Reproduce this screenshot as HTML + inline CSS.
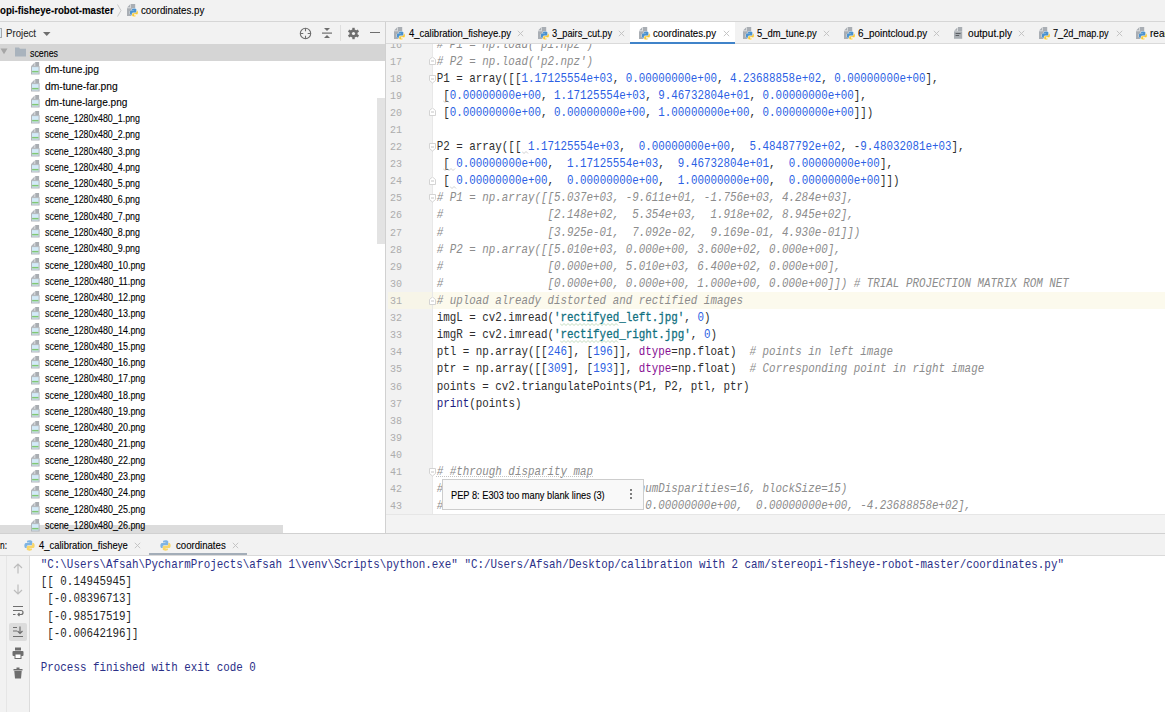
<!DOCTYPE html><html><head><meta charset="utf-8"><style>html,body{margin:0;padding:0}body{width:1165px;height:712px;overflow:hidden;position:relative;background:#fff;font-family:"Liberation Sans",sans-serif}</style></head><body><div style="position:absolute;left:0px;top:0px;width:1165px;height:21px;background:#f2f2f2;"></div>
<div style="position:absolute;left:0px;top:21px;width:1165px;height:1px;background:#d6d6d6;"></div>
<div style="position:absolute;left:0px;top:22px;width:385px;height:22px;background:#f2f2f2;"></div>
<div style="position:absolute;left:0px;top:44px;width:385px;height:490px;background:#ffffff;"></div>
<div style="position:absolute;left:385px;top:22px;width:1px;height:512px;background:#d1d1d1;"></div>
<div style="position:absolute;left:386px;top:22px;width:779px;height:21px;background:#f2f2f2;"></div>
<div style="position:absolute;left:386px;top:43px;width:779px;height:1px;background:#dadada;"></div>
<div style="position:absolute;left:386px;top:44px;width:47px;height:470px;background:#f2f2f2;"></div>
<div style="position:absolute;left:433px;top:44px;width:732px;height:470px;background:#ffffff;"></div>
<div style="position:absolute;left:386px;top:514px;width:779px;height:19px;background:#f3f3f3;"></div>
<div style="position:absolute;left:386px;top:514px;width:779px;height:1px;background:#e6e6e6;"></div>
<div style="position:absolute;left:0px;top:533px;width:1165px;height:1px;background:#d1d1d1;"></div>
<div style="position:absolute;left:0px;top:534px;width:1165px;height:21px;background:#f2f2f2;"></div>
<div style="position:absolute;left:0px;top:555px;width:1165px;height:1px;background:#dadada;"></div>
<div style="position:absolute;left:0px;top:556px;width:30px;height:156px;background:#f2f2f2;"></div>
<div style="position:absolute;left:29px;top:556px;width:1px;height:156px;background:#dcdcdc;"></div>
<div style="position:absolute;left:6px;top:556px;width:1px;height:156px;background:#e6e6e6;"></div>
<div style="position:absolute;left:30px;top:556px;width:1135px;height:156px;background:#ffffff;"></div>
<div style="position:absolute;left:0px;top:1.00px;font:normal bold 10px/20px 'Liberation Sans', sans-serif;color:#000;white-space:pre;-webkit-text-stroke:0.1px #000;transform:scaleX(0.9652);transform-origin:0 0;">opi-fisheye-robot-master</div>
<svg style="position:absolute;left:117px;top:4px" width="5" height="13" viewBox="0 0 5 13"><path d="M0.5 0.5L4 6.5L0.5 12.5" stroke="#c4c4c4" fill="none" stroke-width="0.9"/></svg>
<svg style="position:absolute;left:127px;top:4px" width="12" height="14" viewBox="0 0 12 14"><path d="M3.6 0H8.2V4H3.6Z" fill="#a9aeb4"/><path d="M3 0.5V3.6H0.1Z" fill="#a9aeb4"/><path d="M0 4.2H8.2V12H0Z" fill="#a9aeb4"/><g transform="translate(2.6 4.2) scale(0.56)"><path d="M7.9 0.5C4.2 0.5 4.4 2.1 4.4 2.1V3.8H8V4.3H3C3 4.3 0.5 4 0.5 8S2.7 11.7 2.7 11.7H4V9.9S3.9 7.7 6.2 7.7H9.9S12 7.7 12 5.7V2.4S12.3 0.5 7.9 0.5Z" fill="#4b92cf" stroke="#fff" stroke-width="1.3"/><path d="M8.1 15.5C11.8 15.5 11.6 13.9 11.6 13.9V12.2H8V11.7H13S15.5 12 15.5 8S13.3 4.3 13.3 4.3H12V6.1S12.1 8.3 9.8 8.3H6.1S4 8.3 4 10.3V13.6S3.7 15.5 8.1 15.5Z" fill="#f6c733" stroke="#fff" stroke-width="1.3"/><path d="M7.9 0.5C4.2 0.5 4.4 2.1 4.4 2.1V3.8H8V4.3H3C3 4.3 0.5 4 0.5 8S2.7 11.7 2.7 11.7H4V9.9S3.9 7.7 6.2 7.7H9.9S12 7.7 12 5.7V2.4S12.3 0.5 7.9 0.5Z" fill="#4b92cf"/></g></svg>
<div style="position:absolute;left:140.5px;top:1.00px;font:normal normal 10px/20px 'Liberation Sans', sans-serif;color:#000;white-space:pre;-webkit-text-stroke:0.1px #000;transform:scaleX(0.9732);transform-origin:0 0;">coordinates.py</div>
<div style="position:absolute;left:-6px;top:28px;width:8px;height:10px;background:#dcebf5;box-sizing:border-box;border:1px solid #a5a9ae"></div>
<div style="position:absolute;left:6px;top:24.00px;font:normal normal 10px/20px 'Liberation Sans', sans-serif;color:#2a2a2a;white-space:pre;-webkit-text-stroke:0.1px #2a2a2a;transform:scaleX(0.9639);transform-origin:0 0;">Project</div>
<svg style="position:absolute;left:43px;top:32px" width="8" height="5" viewBox="0 0 8 5"><path d="M0 0H7.5L3.75 4Z" fill="#6e6e6e"/></svg>
<svg style="position:absolute;left:299px;top:27px" width="13" height="13" viewBox="0 0 13 13"><circle cx="6.5" cy="6.5" r="5.2" stroke="#6e6e6e" stroke-width="1.1" fill="none"/><path d="M6.5 1V4.3M6.5 8.7V12M1 6.5H4.3M8.7 6.5H12" stroke="#6e6e6e" stroke-width="1.1"/></svg>
<svg style="position:absolute;left:321px;top:27px" width="12" height="12" viewBox="0 0 12 12"><path d="M3 1H9L6 4Z" fill="#6e6e6e"/><rect x="1" y="5.5" width="10" height="1.2" fill="#6e6e6e"/><path d="M3 11H9L6 8Z" fill="#6e6e6e"/></svg>
<div style="position:absolute;left:340px;top:25px;width:1px;height:16px;background:#dedede;"></div>
<svg style="position:absolute;left:347px;top:27px" width="13" height="13" viewBox="0 0 13 13"><g fill="#6e6e6e"><rect x="5.3" y="0.8" width="2.4" height="3" transform="rotate(0 6.5 6.5)"/><rect x="5.3" y="0.8" width="2.4" height="3" transform="rotate(60 6.5 6.5)"/><rect x="5.3" y="0.8" width="2.4" height="3" transform="rotate(120 6.5 6.5)"/><rect x="5.3" y="0.8" width="2.4" height="3" transform="rotate(180 6.5 6.5)"/><rect x="5.3" y="0.8" width="2.4" height="3" transform="rotate(240 6.5 6.5)"/><rect x="5.3" y="0.8" width="2.4" height="3" transform="rotate(300 6.5 6.5)"/><circle cx="6.5" cy="6.5" r="4"/></g><circle cx="6.5" cy="6.5" r="1.6" fill="#f2f2f2"/></svg>
<div style="position:absolute;left:370px;top:32px;width:10px;height:1.4px;background:#6e6e6e;"></div>
<div style="position:absolute;left:377px;top:98px;width:8px;height:146px;background:#e3e3e3;"></div>
<div style="position:absolute;left:0px;top:525px;width:283px;height:8px;background:#dcdcdc;"></div>
<div style="position:absolute;left:0px;top:44px;width:385px;height:16.5px;background:#d5d5d5;"></div>
<svg style="position:absolute;left:0px;top:48px" width="8" height="7" viewBox="0 0 8 7"><path d="M0.5 0.5H7.5L4 6.2Z" fill="#a6a6a6"/></svg>
<svg style="position:absolute;left:15px;top:47px" width="11" height="10" viewBox="0 0 11 10"><path d="M0 0.5H4L5 1.8H11V9.5H0Z" fill="#a9b3bd"/></svg>
<div style="position:absolute;left:29.5px;top:44.00px;font:normal normal 10px/20px 'Liberation Sans', sans-serif;color:#000;white-space:pre;-webkit-text-stroke:0.1px #000;transform:scaleX(0.8837);transform-origin:0 0;">scenes</div>
<svg style="position:absolute;left:30.6px;top:62.0px" width="9" height="13" viewBox="0 0 9 13"><path d="M0.2 3.9L3.6 0.4V3.9Z" fill="#b3b7bc"/><rect x="4.2" y="0" width="3.9" height="4.1" fill="#a9adb2"/><rect x="0.5" y="4.6" width="7.6" height="7.4" fill="#d3eaf8" stroke="#b1b5ba" stroke-width="1"/><rect x="1.1" y="8.9" width="6.4" height="1.5" fill="#82c674"/></svg>
<div style="position:absolute;left:44.6px;top:60.00px;font:normal normal 10px/20px 'Liberation Sans', sans-serif;color:#000;white-space:pre;-webkit-text-stroke:0.1px #000;transform:scaleX(1.0225);transform-origin:0 0;">dm-tune.jpg</div>
<svg style="position:absolute;left:30.6px;top:79.0px" width="9" height="13" viewBox="0 0 9 13"><path d="M0.2 3.9L3.6 0.4V3.9Z" fill="#b3b7bc"/><rect x="4.2" y="0" width="3.9" height="4.1" fill="#a9adb2"/><rect x="0.5" y="4.6" width="7.6" height="7.4" fill="#d3eaf8" stroke="#b1b5ba" stroke-width="1"/><rect x="1.1" y="8.9" width="6.4" height="1.5" fill="#82c674"/></svg>
<div style="position:absolute;left:44.6px;top:77.00px;font:normal normal 10px/20px 'Liberation Sans', sans-serif;color:#000;white-space:pre;-webkit-text-stroke:0.1px #000;transform:scaleX(1.0312);transform-origin:0 0;">dm-tune-far.png</div>
<svg style="position:absolute;left:30.6px;top:95.0px" width="9" height="13" viewBox="0 0 9 13"><path d="M0.2 3.9L3.6 0.4V3.9Z" fill="#b3b7bc"/><rect x="4.2" y="0" width="3.9" height="4.1" fill="#a9adb2"/><rect x="0.5" y="4.6" width="7.6" height="7.4" fill="#d3eaf8" stroke="#b1b5ba" stroke-width="1"/><rect x="1.1" y="8.9" width="6.4" height="1.5" fill="#82c674"/></svg>
<div style="position:absolute;left:44.6px;top:93.00px;font:normal normal 10px/20px 'Liberation Sans', sans-serif;color:#000;white-space:pre;-webkit-text-stroke:0.1px #000;transform:scaleX(1.0084);transform-origin:0 0;">dm-tune-large.png</div>
<svg style="position:absolute;left:30.6px;top:111.0px" width="9" height="13" viewBox="0 0 9 13"><path d="M0.2 3.9L3.6 0.4V3.9Z" fill="#b3b7bc"/><rect x="4.2" y="0" width="3.9" height="4.1" fill="#a9adb2"/><rect x="0.5" y="4.6" width="7.6" height="7.4" fill="#d3eaf8" stroke="#b1b5ba" stroke-width="1"/><rect x="1.1" y="8.9" width="6.4" height="1.5" fill="#82c674"/></svg>
<div style="position:absolute;left:44.6px;top:109.00px;font:normal normal 10px/20px 'Liberation Sans', sans-serif;color:#000;white-space:pre;-webkit-text-stroke:0.1px #000;transform:scaleX(0.8898);transform-origin:0 0;">scene_1280x480_1.png</div>
<svg style="position:absolute;left:30.6px;top:128.0px" width="9" height="13" viewBox="0 0 9 13"><path d="M0.2 3.9L3.6 0.4V3.9Z" fill="#b3b7bc"/><rect x="4.2" y="0" width="3.9" height="4.1" fill="#a9adb2"/><rect x="0.5" y="4.6" width="7.6" height="7.4" fill="#d3eaf8" stroke="#b1b5ba" stroke-width="1"/><rect x="1.1" y="8.9" width="6.4" height="1.5" fill="#82c674"/></svg>
<div style="position:absolute;left:44.6px;top:125.00px;font:normal normal 10px/20px 'Liberation Sans', sans-serif;color:#000;white-space:pre;-webkit-text-stroke:0.1px #000;transform:scaleX(0.8898);transform-origin:0 0;">scene_1280x480_2.png</div>
<svg style="position:absolute;left:30.6px;top:144.0px" width="9" height="13" viewBox="0 0 9 13"><path d="M0.2 3.9L3.6 0.4V3.9Z" fill="#b3b7bc"/><rect x="4.2" y="0" width="3.9" height="4.1" fill="#a9adb2"/><rect x="0.5" y="4.6" width="7.6" height="7.4" fill="#d3eaf8" stroke="#b1b5ba" stroke-width="1"/><rect x="1.1" y="8.9" width="6.4" height="1.5" fill="#82c674"/></svg>
<div style="position:absolute;left:44.6px;top:142.00px;font:normal normal 10px/20px 'Liberation Sans', sans-serif;color:#000;white-space:pre;-webkit-text-stroke:0.1px #000;transform:scaleX(0.8898);transform-origin:0 0;">scene_1280x480_3.png</div>
<svg style="position:absolute;left:30.6px;top:160.0px" width="9" height="13" viewBox="0 0 9 13"><path d="M0.2 3.9L3.6 0.4V3.9Z" fill="#b3b7bc"/><rect x="4.2" y="0" width="3.9" height="4.1" fill="#a9adb2"/><rect x="0.5" y="4.6" width="7.6" height="7.4" fill="#d3eaf8" stroke="#b1b5ba" stroke-width="1"/><rect x="1.1" y="8.9" width="6.4" height="1.5" fill="#82c674"/></svg>
<div style="position:absolute;left:44.6px;top:158.00px;font:normal normal 10px/20px 'Liberation Sans', sans-serif;color:#000;white-space:pre;-webkit-text-stroke:0.1px #000;transform:scaleX(0.8898);transform-origin:0 0;">scene_1280x480_4.png</div>
<svg style="position:absolute;left:30.6px;top:176.0px" width="9" height="13" viewBox="0 0 9 13"><path d="M0.2 3.9L3.6 0.4V3.9Z" fill="#b3b7bc"/><rect x="4.2" y="0" width="3.9" height="4.1" fill="#a9adb2"/><rect x="0.5" y="4.6" width="7.6" height="7.4" fill="#d3eaf8" stroke="#b1b5ba" stroke-width="1"/><rect x="1.1" y="8.9" width="6.4" height="1.5" fill="#82c674"/></svg>
<div style="position:absolute;left:44.6px;top:174.00px;font:normal normal 10px/20px 'Liberation Sans', sans-serif;color:#000;white-space:pre;-webkit-text-stroke:0.1px #000;transform:scaleX(0.8898);transform-origin:0 0;">scene_1280x480_5.png</div>
<svg style="position:absolute;left:30.6px;top:193.0px" width="9" height="13" viewBox="0 0 9 13"><path d="M0.2 3.9L3.6 0.4V3.9Z" fill="#b3b7bc"/><rect x="4.2" y="0" width="3.9" height="4.1" fill="#a9adb2"/><rect x="0.5" y="4.6" width="7.6" height="7.4" fill="#d3eaf8" stroke="#b1b5ba" stroke-width="1"/><rect x="1.1" y="8.9" width="6.4" height="1.5" fill="#82c674"/></svg>
<div style="position:absolute;left:44.6px;top:190.00px;font:normal normal 10px/20px 'Liberation Sans', sans-serif;color:#000;white-space:pre;-webkit-text-stroke:0.1px #000;transform:scaleX(0.8898);transform-origin:0 0;">scene_1280x480_6.png</div>
<svg style="position:absolute;left:30.6px;top:209.0px" width="9" height="13" viewBox="0 0 9 13"><path d="M0.2 3.9L3.6 0.4V3.9Z" fill="#b3b7bc"/><rect x="4.2" y="0" width="3.9" height="4.1" fill="#a9adb2"/><rect x="0.5" y="4.6" width="7.6" height="7.4" fill="#d3eaf8" stroke="#b1b5ba" stroke-width="1"/><rect x="1.1" y="8.9" width="6.4" height="1.5" fill="#82c674"/></svg>
<div style="position:absolute;left:44.6px;top:207.00px;font:normal normal 10px/20px 'Liberation Sans', sans-serif;color:#000;white-space:pre;-webkit-text-stroke:0.1px #000;transform:scaleX(0.8898);transform-origin:0 0;">scene_1280x480_7.png</div>
<svg style="position:absolute;left:30.6px;top:225.0px" width="9" height="13" viewBox="0 0 9 13"><path d="M0.2 3.9L3.6 0.4V3.9Z" fill="#b3b7bc"/><rect x="4.2" y="0" width="3.9" height="4.1" fill="#a9adb2"/><rect x="0.5" y="4.6" width="7.6" height="7.4" fill="#d3eaf8" stroke="#b1b5ba" stroke-width="1"/><rect x="1.1" y="8.9" width="6.4" height="1.5" fill="#82c674"/></svg>
<div style="position:absolute;left:44.6px;top:223.00px;font:normal normal 10px/20px 'Liberation Sans', sans-serif;color:#000;white-space:pre;-webkit-text-stroke:0.1px #000;transform:scaleX(0.8898);transform-origin:0 0;">scene_1280x480_8.png</div>
<svg style="position:absolute;left:30.6px;top:242.0px" width="9" height="13" viewBox="0 0 9 13"><path d="M0.2 3.9L3.6 0.4V3.9Z" fill="#b3b7bc"/><rect x="4.2" y="0" width="3.9" height="4.1" fill="#a9adb2"/><rect x="0.5" y="4.6" width="7.6" height="7.4" fill="#d3eaf8" stroke="#b1b5ba" stroke-width="1"/><rect x="1.1" y="8.9" width="6.4" height="1.5" fill="#82c674"/></svg>
<div style="position:absolute;left:44.6px;top:239.00px;font:normal normal 10px/20px 'Liberation Sans', sans-serif;color:#000;white-space:pre;-webkit-text-stroke:0.1px #000;transform:scaleX(0.8898);transform-origin:0 0;">scene_1280x480_9.png</div>
<svg style="position:absolute;left:30.6px;top:258.0px" width="9" height="13" viewBox="0 0 9 13"><path d="M0.2 3.9L3.6 0.4V3.9Z" fill="#b3b7bc"/><rect x="4.2" y="0" width="3.9" height="4.1" fill="#a9adb2"/><rect x="0.5" y="4.6" width="7.6" height="7.4" fill="#d3eaf8" stroke="#b1b5ba" stroke-width="1"/><rect x="1.1" y="8.9" width="6.4" height="1.5" fill="#82c674"/></svg>
<div style="position:absolute;left:44.6px;top:256.00px;font:normal normal 10px/20px 'Liberation Sans', sans-serif;color:#000;white-space:pre;-webkit-text-stroke:0.1px #000;transform:scaleX(0.8929);transform-origin:0 0;">scene_1280x480_10.png</div>
<svg style="position:absolute;left:30.6px;top:274.0px" width="9" height="13" viewBox="0 0 9 13"><path d="M0.2 3.9L3.6 0.4V3.9Z" fill="#b3b7bc"/><rect x="4.2" y="0" width="3.9" height="4.1" fill="#a9adb2"/><rect x="0.5" y="4.6" width="7.6" height="7.4" fill="#d3eaf8" stroke="#b1b5ba" stroke-width="1"/><rect x="1.1" y="8.9" width="6.4" height="1.5" fill="#82c674"/></svg>
<div style="position:absolute;left:44.6px;top:272.00px;font:normal normal 10px/20px 'Liberation Sans', sans-serif;color:#000;white-space:pre;-webkit-text-stroke:0.1px #000;transform:scaleX(0.8989);transform-origin:0 0;">scene_1280x480_11.png</div>
<svg style="position:absolute;left:30.6px;top:291.0px" width="9" height="13" viewBox="0 0 9 13"><path d="M0.2 3.9L3.6 0.4V3.9Z" fill="#b3b7bc"/><rect x="4.2" y="0" width="3.9" height="4.1" fill="#a9adb2"/><rect x="0.5" y="4.6" width="7.6" height="7.4" fill="#d3eaf8" stroke="#b1b5ba" stroke-width="1"/><rect x="1.1" y="8.9" width="6.4" height="1.5" fill="#82c674"/></svg>
<div style="position:absolute;left:44.6px;top:288.00px;font:normal normal 10px/20px 'Liberation Sans', sans-serif;color:#000;white-space:pre;-webkit-text-stroke:0.1px #000;transform:scaleX(0.8929);transform-origin:0 0;">scene_1280x480_12.png</div>
<svg style="position:absolute;left:30.6px;top:307.0px" width="9" height="13" viewBox="0 0 9 13"><path d="M0.2 3.9L3.6 0.4V3.9Z" fill="#b3b7bc"/><rect x="4.2" y="0" width="3.9" height="4.1" fill="#a9adb2"/><rect x="0.5" y="4.6" width="7.6" height="7.4" fill="#d3eaf8" stroke="#b1b5ba" stroke-width="1"/><rect x="1.1" y="8.9" width="6.4" height="1.5" fill="#82c674"/></svg>
<div style="position:absolute;left:44.6px;top:304.00px;font:normal normal 10px/20px 'Liberation Sans', sans-serif;color:#000;white-space:pre;-webkit-text-stroke:0.1px #000;transform:scaleX(0.8929);transform-origin:0 0;">scene_1280x480_13.png</div>
<svg style="position:absolute;left:30.6px;top:323.0px" width="9" height="13" viewBox="0 0 9 13"><path d="M0.2 3.9L3.6 0.4V3.9Z" fill="#b3b7bc"/><rect x="4.2" y="0" width="3.9" height="4.1" fill="#a9adb2"/><rect x="0.5" y="4.6" width="7.6" height="7.4" fill="#d3eaf8" stroke="#b1b5ba" stroke-width="1"/><rect x="1.1" y="8.9" width="6.4" height="1.5" fill="#82c674"/></svg>
<div style="position:absolute;left:44.6px;top:321.00px;font:normal normal 10px/20px 'Liberation Sans', sans-serif;color:#000;white-space:pre;-webkit-text-stroke:0.1px #000;transform:scaleX(0.8929);transform-origin:0 0;">scene_1280x480_14.png</div>
<svg style="position:absolute;left:30.6px;top:340.0px" width="9" height="13" viewBox="0 0 9 13"><path d="M0.2 3.9L3.6 0.4V3.9Z" fill="#b3b7bc"/><rect x="4.2" y="0" width="3.9" height="4.1" fill="#a9adb2"/><rect x="0.5" y="4.6" width="7.6" height="7.4" fill="#d3eaf8" stroke="#b1b5ba" stroke-width="1"/><rect x="1.1" y="8.9" width="6.4" height="1.5" fill="#82c674"/></svg>
<div style="position:absolute;left:44.6px;top:337.00px;font:normal normal 10px/20px 'Liberation Sans', sans-serif;color:#000;white-space:pre;-webkit-text-stroke:0.1px #000;transform:scaleX(0.8929);transform-origin:0 0;">scene_1280x480_15.png</div>
<svg style="position:absolute;left:30.6px;top:356.0px" width="9" height="13" viewBox="0 0 9 13"><path d="M0.2 3.9L3.6 0.4V3.9Z" fill="#b3b7bc"/><rect x="4.2" y="0" width="3.9" height="4.1" fill="#a9adb2"/><rect x="0.5" y="4.6" width="7.6" height="7.4" fill="#d3eaf8" stroke="#b1b5ba" stroke-width="1"/><rect x="1.1" y="8.9" width="6.4" height="1.5" fill="#82c674"/></svg>
<div style="position:absolute;left:44.6px;top:353.00px;font:normal normal 10px/20px 'Liberation Sans', sans-serif;color:#000;white-space:pre;-webkit-text-stroke:0.1px #000;transform:scaleX(0.8929);transform-origin:0 0;">scene_1280x480_16.png</div>
<svg style="position:absolute;left:30.6px;top:372.0px" width="9" height="13" viewBox="0 0 9 13"><path d="M0.2 3.9L3.6 0.4V3.9Z" fill="#b3b7bc"/><rect x="4.2" y="0" width="3.9" height="4.1" fill="#a9adb2"/><rect x="0.5" y="4.6" width="7.6" height="7.4" fill="#d3eaf8" stroke="#b1b5ba" stroke-width="1"/><rect x="1.1" y="8.9" width="6.4" height="1.5" fill="#82c674"/></svg>
<div style="position:absolute;left:44.6px;top:369.00px;font:normal normal 10px/20px 'Liberation Sans', sans-serif;color:#000;white-space:pre;-webkit-text-stroke:0.1px #000;transform:scaleX(0.8929);transform-origin:0 0;">scene_1280x480_17.png</div>
<svg style="position:absolute;left:30.6px;top:388.0px" width="9" height="13" viewBox="0 0 9 13"><path d="M0.2 3.9L3.6 0.4V3.9Z" fill="#b3b7bc"/><rect x="4.2" y="0" width="3.9" height="4.1" fill="#a9adb2"/><rect x="0.5" y="4.6" width="7.6" height="7.4" fill="#d3eaf8" stroke="#b1b5ba" stroke-width="1"/><rect x="1.1" y="8.9" width="6.4" height="1.5" fill="#82c674"/></svg>
<div style="position:absolute;left:44.6px;top:386.00px;font:normal normal 10px/20px 'Liberation Sans', sans-serif;color:#000;white-space:pre;-webkit-text-stroke:0.1px #000;transform:scaleX(0.8929);transform-origin:0 0;">scene_1280x480_18.png</div>
<svg style="position:absolute;left:30.6px;top:405.0px" width="9" height="13" viewBox="0 0 9 13"><path d="M0.2 3.9L3.6 0.4V3.9Z" fill="#b3b7bc"/><rect x="4.2" y="0" width="3.9" height="4.1" fill="#a9adb2"/><rect x="0.5" y="4.6" width="7.6" height="7.4" fill="#d3eaf8" stroke="#b1b5ba" stroke-width="1"/><rect x="1.1" y="8.9" width="6.4" height="1.5" fill="#82c674"/></svg>
<div style="position:absolute;left:44.6px;top:402.00px;font:normal normal 10px/20px 'Liberation Sans', sans-serif;color:#000;white-space:pre;-webkit-text-stroke:0.1px #000;transform:scaleX(0.8929);transform-origin:0 0;">scene_1280x480_19.png</div>
<svg style="position:absolute;left:30.6px;top:421.0px" width="9" height="13" viewBox="0 0 9 13"><path d="M0.2 3.9L3.6 0.4V3.9Z" fill="#b3b7bc"/><rect x="4.2" y="0" width="3.9" height="4.1" fill="#a9adb2"/><rect x="0.5" y="4.6" width="7.6" height="7.4" fill="#d3eaf8" stroke="#b1b5ba" stroke-width="1"/><rect x="1.1" y="8.9" width="6.4" height="1.5" fill="#82c674"/></svg>
<div style="position:absolute;left:44.6px;top:418.00px;font:normal normal 10px/20px 'Liberation Sans', sans-serif;color:#000;white-space:pre;-webkit-text-stroke:0.1px #000;transform:scaleX(0.8929);transform-origin:0 0;">scene_1280x480_20.png</div>
<svg style="position:absolute;left:30.6px;top:437.0px" width="9" height="13" viewBox="0 0 9 13"><path d="M0.2 3.9L3.6 0.4V3.9Z" fill="#b3b7bc"/><rect x="4.2" y="0" width="3.9" height="4.1" fill="#a9adb2"/><rect x="0.5" y="4.6" width="7.6" height="7.4" fill="#d3eaf8" stroke="#b1b5ba" stroke-width="1"/><rect x="1.1" y="8.9" width="6.4" height="1.5" fill="#82c674"/></svg>
<div style="position:absolute;left:44.6px;top:434.00px;font:normal normal 10px/20px 'Liberation Sans', sans-serif;color:#000;white-space:pre;-webkit-text-stroke:0.1px #000;transform:scaleX(0.8929);transform-origin:0 0;">scene_1280x480_21.png</div>
<svg style="position:absolute;left:30.6px;top:454.0px" width="9" height="13" viewBox="0 0 9 13"><path d="M0.2 3.9L3.6 0.4V3.9Z" fill="#b3b7bc"/><rect x="4.2" y="0" width="3.9" height="4.1" fill="#a9adb2"/><rect x="0.5" y="4.6" width="7.6" height="7.4" fill="#d3eaf8" stroke="#b1b5ba" stroke-width="1"/><rect x="1.1" y="8.9" width="6.4" height="1.5" fill="#82c674"/></svg>
<div style="position:absolute;left:44.6px;top:451.00px;font:normal normal 10px/20px 'Liberation Sans', sans-serif;color:#000;white-space:pre;-webkit-text-stroke:0.1px #000;transform:scaleX(0.8929);transform-origin:0 0;">scene_1280x480_22.png</div>
<svg style="position:absolute;left:30.6px;top:470.0px" width="9" height="13" viewBox="0 0 9 13"><path d="M0.2 3.9L3.6 0.4V3.9Z" fill="#b3b7bc"/><rect x="4.2" y="0" width="3.9" height="4.1" fill="#a9adb2"/><rect x="0.5" y="4.6" width="7.6" height="7.4" fill="#d3eaf8" stroke="#b1b5ba" stroke-width="1"/><rect x="1.1" y="8.9" width="6.4" height="1.5" fill="#82c674"/></svg>
<div style="position:absolute;left:44.6px;top:467.00px;font:normal normal 10px/20px 'Liberation Sans', sans-serif;color:#000;white-space:pre;-webkit-text-stroke:0.1px #000;transform:scaleX(0.8929);transform-origin:0 0;">scene_1280x480_23.png</div>
<svg style="position:absolute;left:30.6px;top:486.0px" width="9" height="13" viewBox="0 0 9 13"><path d="M0.2 3.9L3.6 0.4V3.9Z" fill="#b3b7bc"/><rect x="4.2" y="0" width="3.9" height="4.1" fill="#a9adb2"/><rect x="0.5" y="4.6" width="7.6" height="7.4" fill="#d3eaf8" stroke="#b1b5ba" stroke-width="1"/><rect x="1.1" y="8.9" width="6.4" height="1.5" fill="#82c674"/></svg>
<div style="position:absolute;left:44.6px;top:483.00px;font:normal normal 10px/20px 'Liberation Sans', sans-serif;color:#000;white-space:pre;-webkit-text-stroke:0.1px #000;transform:scaleX(0.8929);transform-origin:0 0;">scene_1280x480_24.png</div>
<svg style="position:absolute;left:30.6px;top:502.0px" width="9" height="13" viewBox="0 0 9 13"><path d="M0.2 3.9L3.6 0.4V3.9Z" fill="#b3b7bc"/><rect x="4.2" y="0" width="3.9" height="4.1" fill="#a9adb2"/><rect x="0.5" y="4.6" width="7.6" height="7.4" fill="#d3eaf8" stroke="#b1b5ba" stroke-width="1"/><rect x="1.1" y="8.9" width="6.4" height="1.5" fill="#82c674"/></svg>
<div style="position:absolute;left:44.6px;top:500.00px;font:normal normal 10px/20px 'Liberation Sans', sans-serif;color:#000;white-space:pre;-webkit-text-stroke:0.1px #000;transform:scaleX(0.8929);transform-origin:0 0;">scene_1280x480_25.png</div>
<svg style="position:absolute;left:30.6px;top:519.0px" width="9" height="13" viewBox="0 0 9 13"><path d="M0.2 3.9L3.6 0.4V3.9Z" fill="#b3b7bc"/><rect x="4.2" y="0" width="3.9" height="4.1" fill="#a9adb2"/><rect x="0.5" y="4.6" width="7.6" height="7.4" fill="#d3eaf8" stroke="#b1b5ba" stroke-width="1"/><rect x="1.1" y="8.9" width="6.4" height="1.5" fill="#82c674"/></svg>
<div style="position:absolute;left:44.6px;top:516.00px;font:normal normal 10px/20px 'Liberation Sans', sans-serif;color:#000;white-space:pre;-webkit-text-stroke:0.1px #000;transform:scaleX(0.8929);transform-origin:0 0;">scene_1280x480_26.png</div>
<div style="position:absolute;left:630px;top:22px;width:105px;height:21px;background:#ffffff;"></div>
<div style="position:absolute;left:630px;top:42px;width:105px;height:2px;background:#4083c9;"></div>
<svg style="position:absolute;left:394px;top:27px" width="12" height="14" viewBox="0 0 12 14"><path d="M3.6 0H8.2V4H3.6Z" fill="#a9aeb4"/><path d="M3 0.5V3.6H0.1Z" fill="#a9aeb4"/><path d="M0 4.2H8.2V12H0Z" fill="#a9aeb4"/><g transform="translate(2.6 4.2) scale(0.56)"><path d="M7.9 0.5C4.2 0.5 4.4 2.1 4.4 2.1V3.8H8V4.3H3C3 4.3 0.5 4 0.5 8S2.7 11.7 2.7 11.7H4V9.9S3.9 7.7 6.2 7.7H9.9S12 7.7 12 5.7V2.4S12.3 0.5 7.9 0.5Z" fill="#4b92cf" stroke="#fff" stroke-width="1.3"/><path d="M8.1 15.5C11.8 15.5 11.6 13.9 11.6 13.9V12.2H8V11.7H13S15.5 12 15.5 8S13.3 4.3 13.3 4.3H12V6.1S12.1 8.3 9.8 8.3H6.1S4 8.3 4 10.3V13.6S3.7 15.5 8.1 15.5Z" fill="#f6c733" stroke="#fff" stroke-width="1.3"/><path d="M7.9 0.5C4.2 0.5 4.4 2.1 4.4 2.1V3.8H8V4.3H3C3 4.3 0.5 4 0.5 8S2.7 11.7 2.7 11.7H4V9.9S3.9 7.7 6.2 7.7H9.9S12 7.7 12 5.7V2.4S12.3 0.5 7.9 0.5Z" fill="#4b92cf"/></g></svg>
<div style="position:absolute;left:408.7px;top:24.00px;font:normal normal 10px/20px 'Liberation Sans', sans-serif;color:#000;white-space:pre;-webkit-text-stroke:0.1px #000;transform:scaleX(0.9507);transform-origin:0 0;">4_calibration_fisheye.py</div>
<svg style="position:absolute;left:517px;top:30px" width="7" height="7" viewBox="0 0 7 7"><path d="M0.8 0.8L6.2 6.2M6.2 0.8L0.8 6.2" stroke="#bfbfbf" stroke-width="0.9"/></svg>
<svg style="position:absolute;left:538px;top:27px" width="12" height="14" viewBox="0 0 12 14"><path d="M3.6 0H8.2V4H3.6Z" fill="#a9aeb4"/><path d="M3 0.5V3.6H0.1Z" fill="#a9aeb4"/><path d="M0 4.2H8.2V12H0Z" fill="#a9aeb4"/><g transform="translate(2.6 4.2) scale(0.56)"><path d="M7.9 0.5C4.2 0.5 4.4 2.1 4.4 2.1V3.8H8V4.3H3C3 4.3 0.5 4 0.5 8S2.7 11.7 2.7 11.7H4V9.9S3.9 7.7 6.2 7.7H9.9S12 7.7 12 5.7V2.4S12.3 0.5 7.9 0.5Z" fill="#4b92cf" stroke="#fff" stroke-width="1.3"/><path d="M8.1 15.5C11.8 15.5 11.6 13.9 11.6 13.9V12.2H8V11.7H13S15.5 12 15.5 8S13.3 4.3 13.3 4.3H12V6.1S12.1 8.3 9.8 8.3H6.1S4 8.3 4 10.3V13.6S3.7 15.5 8.1 15.5Z" fill="#f6c733" stroke="#fff" stroke-width="1.3"/><path d="M7.9 0.5C4.2 0.5 4.4 2.1 4.4 2.1V3.8H8V4.3H3C3 4.3 0.5 4 0.5 8S2.7 11.7 2.7 11.7H4V9.9S3.9 7.7 6.2 7.7H9.9S12 7.7 12 5.7V2.4S12.3 0.5 7.9 0.5Z" fill="#4b92cf"/></g></svg>
<div style="position:absolute;left:551.5px;top:24.00px;font:normal normal 10px/20px 'Liberation Sans', sans-serif;color:#000;white-space:pre;-webkit-text-stroke:0.1px #000;transform:scaleX(0.9240);transform-origin:0 0;">3_pairs_cut.py</div>
<svg style="position:absolute;left:618px;top:30px" width="7" height="7" viewBox="0 0 7 7"><path d="M0.8 0.8L6.2 6.2M6.2 0.8L0.8 6.2" stroke="#bfbfbf" stroke-width="0.9"/></svg>
<svg style="position:absolute;left:639px;top:27px" width="12" height="14" viewBox="0 0 12 14"><path d="M3.6 0H8.2V4H3.6Z" fill="#a9aeb4"/><path d="M3 0.5V3.6H0.1Z" fill="#a9aeb4"/><path d="M0 4.2H8.2V12H0Z" fill="#a9aeb4"/><g transform="translate(2.6 4.2) scale(0.56)"><path d="M7.9 0.5C4.2 0.5 4.4 2.1 4.4 2.1V3.8H8V4.3H3C3 4.3 0.5 4 0.5 8S2.7 11.7 2.7 11.7H4V9.9S3.9 7.7 6.2 7.7H9.9S12 7.7 12 5.7V2.4S12.3 0.5 7.9 0.5Z" fill="#4b92cf" stroke="#fff" stroke-width="1.3"/><path d="M8.1 15.5C11.8 15.5 11.6 13.9 11.6 13.9V12.2H8V11.7H13S15.5 12 15.5 8S13.3 4.3 13.3 4.3H12V6.1S12.1 8.3 9.8 8.3H6.1S4 8.3 4 10.3V13.6S3.7 15.5 8.1 15.5Z" fill="#f6c733" stroke="#fff" stroke-width="1.3"/><path d="M7.9 0.5C4.2 0.5 4.4 2.1 4.4 2.1V3.8H8V4.3H3C3 4.3 0.5 4 0.5 8S2.7 11.7 2.7 11.7H4V9.9S3.9 7.7 6.2 7.7H9.9S12 7.7 12 5.7V2.4S12.3 0.5 7.9 0.5Z" fill="#4b92cf"/></g></svg>
<div style="position:absolute;left:652.8px;top:24.00px;font:normal normal 10px/20px 'Liberation Sans', sans-serif;color:#000;white-space:pre;-webkit-text-stroke:0.1px #000;transform:scaleX(0.9686);transform-origin:0 0;">coordinates.py</div>
<svg style="position:absolute;left:723px;top:30px" width="7" height="7" viewBox="0 0 7 7"><path d="M0.8 0.8L6.2 6.2M6.2 0.8L0.8 6.2" stroke="#bfbfbf" stroke-width="0.9"/></svg>
<svg style="position:absolute;left:743px;top:27px" width="12" height="14" viewBox="0 0 12 14"><path d="M3.6 0H8.2V4H3.6Z" fill="#a9aeb4"/><path d="M3 0.5V3.6H0.1Z" fill="#a9aeb4"/><path d="M0 4.2H8.2V12H0Z" fill="#a9aeb4"/><g transform="translate(2.6 4.2) scale(0.56)"><path d="M7.9 0.5C4.2 0.5 4.4 2.1 4.4 2.1V3.8H8V4.3H3C3 4.3 0.5 4 0.5 8S2.7 11.7 2.7 11.7H4V9.9S3.9 7.7 6.2 7.7H9.9S12 7.7 12 5.7V2.4S12.3 0.5 7.9 0.5Z" fill="#4b92cf" stroke="#fff" stroke-width="1.3"/><path d="M8.1 15.5C11.8 15.5 11.6 13.9 11.6 13.9V12.2H8V11.7H13S15.5 12 15.5 8S13.3 4.3 13.3 4.3H12V6.1S12.1 8.3 9.8 8.3H6.1S4 8.3 4 10.3V13.6S3.7 15.5 8.1 15.5Z" fill="#f6c733" stroke="#fff" stroke-width="1.3"/><path d="M7.9 0.5C4.2 0.5 4.4 2.1 4.4 2.1V3.8H8V4.3H3C3 4.3 0.5 4 0.5 8S2.7 11.7 2.7 11.7H4V9.9S3.9 7.7 6.2 7.7H9.9S12 7.7 12 5.7V2.4S12.3 0.5 7.9 0.5Z" fill="#4b92cf"/></g></svg>
<div style="position:absolute;left:757px;top:24.00px;font:normal normal 10px/20px 'Liberation Sans', sans-serif;color:#000;white-space:pre;-webkit-text-stroke:0.1px #000;transform:scaleX(0.9419);transform-origin:0 0;">5_dm_tune.py</div>
<svg style="position:absolute;left:823px;top:30px" width="7" height="7" viewBox="0 0 7 7"><path d="M0.8 0.8L6.2 6.2M6.2 0.8L0.8 6.2" stroke="#bfbfbf" stroke-width="0.9"/></svg>
<svg style="position:absolute;left:844px;top:27px" width="12" height="14" viewBox="0 0 12 14"><path d="M3.6 0H8.2V4H3.6Z" fill="#a9aeb4"/><path d="M3 0.5V3.6H0.1Z" fill="#a9aeb4"/><path d="M0 4.2H8.2V12H0Z" fill="#a9aeb4"/><g transform="translate(2.6 4.2) scale(0.56)"><path d="M7.9 0.5C4.2 0.5 4.4 2.1 4.4 2.1V3.8H8V4.3H3C3 4.3 0.5 4 0.5 8S2.7 11.7 2.7 11.7H4V9.9S3.9 7.7 6.2 7.7H9.9S12 7.7 12 5.7V2.4S12.3 0.5 7.9 0.5Z" fill="#4b92cf" stroke="#fff" stroke-width="1.3"/><path d="M8.1 15.5C11.8 15.5 11.6 13.9 11.6 13.9V12.2H8V11.7H13S15.5 12 15.5 8S13.3 4.3 13.3 4.3H12V6.1S12.1 8.3 9.8 8.3H6.1S4 8.3 4 10.3V13.6S3.7 15.5 8.1 15.5Z" fill="#f6c733" stroke="#fff" stroke-width="1.3"/><path d="M7.9 0.5C4.2 0.5 4.4 2.1 4.4 2.1V3.8H8V4.3H3C3 4.3 0.5 4 0.5 8S2.7 11.7 2.7 11.7H4V9.9S3.9 7.7 6.2 7.7H9.9S12 7.7 12 5.7V2.4S12.3 0.5 7.9 0.5Z" fill="#4b92cf"/></g></svg>
<div style="position:absolute;left:857.7px;top:24.00px;font:normal normal 10px/20px 'Liberation Sans', sans-serif;color:#000;white-space:pre;-webkit-text-stroke:0.1px #000;transform:scaleX(0.9892);transform-origin:0 0;">6_pointcloud.py</div>
<svg style="position:absolute;left:933px;top:30px" width="7" height="7" viewBox="0 0 7 7"><path d="M0.8 0.8L6.2 6.2M6.2 0.8L0.8 6.2" stroke="#bfbfbf" stroke-width="0.9"/></svg>
<svg style="position:absolute;left:954px;top:27px" width="9" height="12" viewBox="0 0 9 12"><path d="M0.2 3.7L3.4 0.4V3.7Z" fill="#a9aeb3"/><rect x="4" y="0" width="4.2" height="4" fill="#a9aeb3"/><rect x="0" y="4.3" width="8.2" height="7.5" fill="#a9aeb3"/><rect x="1.6" y="6" width="5" height="1" fill="#5b5f63"/><rect x="1.6" y="8" width="3.5" height="1" fill="#5b5f63"/></svg>
<div style="position:absolute;left:968px;top:24.00px;font:normal normal 10px/20px 'Liberation Sans', sans-serif;color:#000;white-space:pre;-webkit-text-stroke:0.1px #000;transform:scaleX(1.0146);transform-origin:0 0;">output.ply</div>
<svg style="position:absolute;left:1018px;top:30px" width="7" height="7" viewBox="0 0 7 7"><path d="M0.8 0.8L6.2 6.2M6.2 0.8L0.8 6.2" stroke="#bfbfbf" stroke-width="0.9"/></svg>
<svg style="position:absolute;left:1039px;top:27px" width="12" height="14" viewBox="0 0 12 14"><path d="M3.6 0H8.2V4H3.6Z" fill="#a9aeb4"/><path d="M3 0.5V3.6H0.1Z" fill="#a9aeb4"/><path d="M0 4.2H8.2V12H0Z" fill="#a9aeb4"/><g transform="translate(2.6 4.2) scale(0.56)"><path d="M7.9 0.5C4.2 0.5 4.4 2.1 4.4 2.1V3.8H8V4.3H3C3 4.3 0.5 4 0.5 8S2.7 11.7 2.7 11.7H4V9.9S3.9 7.7 6.2 7.7H9.9S12 7.7 12 5.7V2.4S12.3 0.5 7.9 0.5Z" fill="#4b92cf" stroke="#fff" stroke-width="1.3"/><path d="M8.1 15.5C11.8 15.5 11.6 13.9 11.6 13.9V12.2H8V11.7H13S15.5 12 15.5 8S13.3 4.3 13.3 4.3H12V6.1S12.1 8.3 9.8 8.3H6.1S4 8.3 4 10.3V13.6S3.7 15.5 8.1 15.5Z" fill="#f6c733" stroke="#fff" stroke-width="1.3"/><path d="M7.9 0.5C4.2 0.5 4.4 2.1 4.4 2.1V3.8H8V4.3H3C3 4.3 0.5 4 0.5 8S2.7 11.7 2.7 11.7H4V9.9S3.9 7.7 6.2 7.7H9.9S12 7.7 12 5.7V2.4S12.3 0.5 7.9 0.5Z" fill="#4b92cf"/></g></svg>
<div style="position:absolute;left:1053.4px;top:24.00px;font:normal normal 10px/20px 'Liberation Sans', sans-serif;color:#000;white-space:pre;-webkit-text-stroke:0.1px #000;transform:scaleX(0.9175);transform-origin:0 0;">7_2d_map.py</div>
<svg style="position:absolute;left:1116px;top:30px" width="7" height="7" viewBox="0 0 7 7"><path d="M0.8 0.8L6.2 6.2M6.2 0.8L0.8 6.2" stroke="#bfbfbf" stroke-width="0.9"/></svg>
<svg style="position:absolute;left:1136px;top:27px" width="12" height="14" viewBox="0 0 12 14"><path d="M3.6 0H8.2V4H3.6Z" fill="#a9aeb4"/><path d="M3 0.5V3.6H0.1Z" fill="#a9aeb4"/><path d="M0 4.2H8.2V12H0Z" fill="#a9aeb4"/><g transform="translate(2.6 4.2) scale(0.56)"><path d="M7.9 0.5C4.2 0.5 4.4 2.1 4.4 2.1V3.8H8V4.3H3C3 4.3 0.5 4 0.5 8S2.7 11.7 2.7 11.7H4V9.9S3.9 7.7 6.2 7.7H9.9S12 7.7 12 5.7V2.4S12.3 0.5 7.9 0.5Z" fill="#4b92cf" stroke="#fff" stroke-width="1.3"/><path d="M8.1 15.5C11.8 15.5 11.6 13.9 11.6 13.9V12.2H8V11.7H13S15.5 12 15.5 8S13.3 4.3 13.3 4.3H12V6.1S12.1 8.3 9.8 8.3H6.1S4 8.3 4 10.3V13.6S3.7 15.5 8.1 15.5Z" fill="#f6c733" stroke="#fff" stroke-width="1.3"/><path d="M7.9 0.5C4.2 0.5 4.4 2.1 4.4 2.1V3.8H8V4.3H3C3 4.3 0.5 4 0.5 8S2.7 11.7 2.7 11.7H4V9.9S3.9 7.7 6.2 7.7H9.9S12 7.7 12 5.7V2.4S12.3 0.5 7.9 0.5Z" fill="#4b92cf"/></g></svg>
<div style="position:absolute;left:1150px;top:24.00px;font:normal normal 10px/20px 'Liberation Sans', sans-serif;color:#000;white-space:pre;-webkit-text-stroke:0.1px #000;">readme</div>
<div style="position:absolute;left:386px;top:44px;width:779px;height:470px;overflow:hidden">
<div style="position:absolute;left:47px;top:248px;width:732px;height:17px;background:#fcfaed;"></div>
<div style="position:absolute;left:2px;top:248px;width:45px;height:17px;background:#f7f5e8;"></div>
<div style="position:absolute;left:46px;top:0px;width:1px;height:470px;background:#e8e8e8;"></div>
<div style="position:absolute;left:4.00px;top:-8.00px;font:10px/20px 'Liberation Mono', monospace;color:#adadad;white-space:pre">16</div>
<div style="position:absolute;left:50.70px;top:-9.00px;font:10.867px/20px 'Liberation Mono', monospace;white-space:pre;transform:scaleY(1.1);transform-origin:0 13px"><span style="color:#8c8c8c;font-style:italic"># P1 = np.load(&#x27;p1.npz&#x27;)</span></div>
<div style="position:absolute;left:4.00px;top:9.00px;font:10px/20px 'Liberation Mono', monospace;color:#adadad;white-space:pre">17</div>
<div style="position:absolute;left:50.70px;top:8.00px;font:10.867px/20px 'Liberation Mono', monospace;white-space:pre;transform:scaleY(1.1);transform-origin:0 13px"><span style="color:#8c8c8c;font-style:italic"># P2 = np.load(&#x27;p2.npz&#x27;)</span></div>
<div style="position:absolute;left:4.00px;top:26.00px;font:10px/20px 'Liberation Mono', monospace;color:#adadad;white-space:pre">18</div>
<div style="position:absolute;left:50.70px;top:25.00px;font:10.867px/20px 'Liberation Mono', monospace;white-space:pre;transform:scaleY(1.1);transform-origin:0 13px"><span style="color:#2e2e2e">P1 = array([[</span><span style="color:#2c5fe4">1.17125554e+03</span><span style="color:#2e2e2e">, </span><span style="color:#2c5fe4">0.00000000e+00</span><span style="color:#2e2e2e">, </span><span style="color:#2c5fe4">4.23688858e+02</span><span style="color:#2e2e2e">, </span><span style="color:#2c5fe4">0.00000000e+00</span><span style="color:#2e2e2e">],</span></div>
<div style="position:absolute;left:4.00px;top:43.00px;font:10px/20px 'Liberation Mono', monospace;color:#adadad;white-space:pre">19</div>
<div style="position:absolute;left:50.70px;top:42.00px;font:10.867px/20px 'Liberation Mono', monospace;white-space:pre;transform:scaleY(1.1);transform-origin:0 13px"><span style="color:#2e2e2e"> [</span><span style="color:#2c5fe4">0.00000000e+00</span><span style="color:#2e2e2e">, </span><span style="color:#2c5fe4">1.17125554e+03</span><span style="color:#2e2e2e">, </span><span style="color:#2c5fe4">9.46732804e+01</span><span style="color:#2e2e2e">, </span><span style="color:#2c5fe4">0.00000000e+00</span><span style="color:#2e2e2e">],</span></div>
<div style="position:absolute;left:4.00px;top:60.00px;font:10px/20px 'Liberation Mono', monospace;color:#adadad;white-space:pre">20</div>
<div style="position:absolute;left:50.70px;top:59.00px;font:10.867px/20px 'Liberation Mono', monospace;white-space:pre;transform:scaleY(1.1);transform-origin:0 13px"><span style="color:#2e2e2e"> [</span><span style="color:#2c5fe4">0.00000000e+00</span><span style="color:#2e2e2e">, </span><span style="color:#2c5fe4">0.00000000e+00</span><span style="color:#2e2e2e">, </span><span style="color:#2c5fe4">1.00000000e+00</span><span style="color:#2e2e2e">, </span><span style="color:#2c5fe4">0.00000000e+00</span><span style="color:#2e2e2e">]])</span></div>
<div style="position:absolute;left:4.00px;top:77.00px;font:10px/20px 'Liberation Mono', monospace;color:#adadad;white-space:pre">21</div>
<div style="position:absolute;left:4.00px;top:94.00px;font:10px/20px 'Liberation Mono', monospace;color:#adadad;white-space:pre">22</div>
<div style="position:absolute;left:50.70px;top:93.00px;font:10.867px/20px 'Liberation Mono', monospace;white-space:pre;transform:scaleY(1.1);transform-origin:0 13px"><span style="color:#2e2e2e">P2 = array([[ </span><span style="color:#2c5fe4">1.17125554e+03</span><span style="color:#2e2e2e">,  </span><span style="color:#2c5fe4">0.00000000e+00</span><span style="color:#2e2e2e">,  </span><span style="color:#2c5fe4">5.48487792e+02</span><span style="color:#2e2e2e">, </span><span style="color:#2e2e2e">-</span><span style="color:#2c5fe4">9.48032081e+03</span><span style="color:#2e2e2e">],</span></div>
<div style="position:absolute;left:4.00px;top:111.00px;font:10px/20px 'Liberation Mono', monospace;color:#adadad;white-space:pre">23</div>
<div style="position:absolute;left:50.70px;top:110.00px;font:10.867px/20px 'Liberation Mono', monospace;white-space:pre;transform:scaleY(1.1);transform-origin:0 13px"><span style="color:#2e2e2e"> [ </span><span style="color:#2c5fe4">0.00000000e+00</span><span style="color:#2e2e2e">,  </span><span style="color:#2c5fe4">1.17125554e+03</span><span style="color:#2e2e2e">,  </span><span style="color:#2c5fe4">9.46732804e+01</span><span style="color:#2e2e2e">,  </span><span style="color:#2c5fe4">0.00000000e+00</span><span style="color:#2e2e2e">],</span></div>
<div style="position:absolute;left:4.00px;top:128.00px;font:10px/20px 'Liberation Mono', monospace;color:#adadad;white-space:pre">24</div>
<div style="position:absolute;left:50.70px;top:127.00px;font:10.867px/20px 'Liberation Mono', monospace;white-space:pre;transform:scaleY(1.1);transform-origin:0 13px"><span style="color:#2e2e2e"> [ </span><span style="color:#2c5fe4">0.00000000e+00</span><span style="color:#2e2e2e">,  </span><span style="color:#2c5fe4">0.00000000e+00</span><span style="color:#2e2e2e">,  </span><span style="color:#2c5fe4">1.00000000e+00</span><span style="color:#2e2e2e">,  </span><span style="color:#2c5fe4">0.00000000e+00</span><span style="color:#2e2e2e">]])</span></div>
<div style="position:absolute;left:4.00px;top:145.00px;font:10px/20px 'Liberation Mono', monospace;color:#adadad;white-space:pre">25</div>
<div style="position:absolute;left:50.70px;top:144.00px;font:10.867px/20px 'Liberation Mono', monospace;white-space:pre;transform:scaleY(1.1);transform-origin:0 13px"><span style="color:#8c8c8c;font-style:italic"># P1 = np.array([[5.037e+03, -9.611e+01, -1.756e+03, 4.284e+03],</span></div>
<div style="position:absolute;left:4.00px;top:162.00px;font:10px/20px 'Liberation Mono', monospace;color:#adadad;white-space:pre">26</div>
<div style="position:absolute;left:50.70px;top:161.00px;font:10.867px/20px 'Liberation Mono', monospace;white-space:pre;transform:scaleY(1.1);transform-origin:0 13px"><span style="color:#8c8c8c;font-style:italic">#                [2.148e+02,  5.354e+03,  1.918e+02, 8.945e+02],</span></div>
<div style="position:absolute;left:4.00px;top:180.00px;font:10px/20px 'Liberation Mono', monospace;color:#adadad;white-space:pre">27</div>
<div style="position:absolute;left:50.70px;top:179.00px;font:10.867px/20px 'Liberation Mono', monospace;white-space:pre;transform:scaleY(1.1);transform-origin:0 13px"><span style="color:#8c8c8c;font-style:italic">#                [3.925e-01,  7.092e-02,  9.169e-01, 4.930e-01]])</span></div>
<div style="position:absolute;left:4.00px;top:197.00px;font:10px/20px 'Liberation Mono', monospace;color:#adadad;white-space:pre">28</div>
<div style="position:absolute;left:50.70px;top:196.00px;font:10.867px/20px 'Liberation Mono', monospace;white-space:pre;transform:scaleY(1.1);transform-origin:0 13px"><span style="color:#8c8c8c;font-style:italic"># P2 = np.array([[5.010e+03, 0.000e+00, 3.600e+02, 0.000e+00],</span></div>
<div style="position:absolute;left:4.00px;top:214.00px;font:10px/20px 'Liberation Mono', monospace;color:#adadad;white-space:pre">29</div>
<div style="position:absolute;left:50.70px;top:213.00px;font:10.867px/20px 'Liberation Mono', monospace;white-space:pre;transform:scaleY(1.1);transform-origin:0 13px"><span style="color:#8c8c8c;font-style:italic">#                [0.000e+00, 5.010e+03, 6.400e+02, 0.000e+00],</span></div>
<div style="position:absolute;left:4.00px;top:231.00px;font:10px/20px 'Liberation Mono', monospace;color:#adadad;white-space:pre">30</div>
<div style="position:absolute;left:50.70px;top:230.00px;font:10.867px/20px 'Liberation Mono', monospace;white-space:pre;transform:scaleY(1.1);transform-origin:0 13px"><span style="color:#8c8c8c;font-style:italic">#                [0.000e+00, 0.000e+00, 1.000e+00, 0.000e+00]]) # TRIAL PROJECTION MATRIX ROM NET</span></div>
<div style="position:absolute;left:4.00px;top:248.00px;font:10px/20px 'Liberation Mono', monospace;color:#adadad;white-space:pre">31</div>
<div style="position:absolute;left:50.70px;top:247.00px;font:10.867px/20px 'Liberation Mono', monospace;white-space:pre;transform:scaleY(1.1);transform-origin:0 13px"><span style="color:#8c8c8c;font-style:italic"># upload already distorted and rectified images</span></div>
<div style="position:absolute;left:4.00px;top:265.00px;font:10px/20px 'Liberation Mono', monospace;color:#adadad;white-space:pre">32</div>
<div style="position:absolute;left:50.70px;top:264.00px;font:10.867px/20px 'Liberation Mono', monospace;white-space:pre;transform:scaleY(1.1);transform-origin:0 13px"><span style="color:#2e2e2e">imgL = cv2.imread(</span><span style="color:#10707f;-webkit-text-stroke:0.25px #10707f">&#x27;rectifyed_left.jpg&#x27;</span><span style="color:#2e2e2e">, </span><span style="color:#2c5fe4">0</span><span style="color:#2e2e2e">)</span></div>
<div style="position:absolute;left:4.00px;top:282.00px;font:10px/20px 'Liberation Mono', monospace;color:#adadad;white-space:pre">33</div>
<div style="position:absolute;left:50.70px;top:281.00px;font:10.867px/20px 'Liberation Mono', monospace;white-space:pre;transform:scaleY(1.1);transform-origin:0 13px"><span style="color:#2e2e2e">imgR = cv2.imread(</span><span style="color:#10707f;-webkit-text-stroke:0.25px #10707f">&#x27;rectifyed_right.jpg&#x27;</span><span style="color:#2e2e2e">, </span><span style="color:#2c5fe4">0</span><span style="color:#2e2e2e">)</span></div>
<div style="position:absolute;left:4.00px;top:299.00px;font:10px/20px 'Liberation Mono', monospace;color:#adadad;white-space:pre">34</div>
<div style="position:absolute;left:50.70px;top:298.00px;font:10.867px/20px 'Liberation Mono', monospace;white-space:pre;transform:scaleY(1.1);transform-origin:0 13px"><span style="color:#2e2e2e">ptl = np.array([[</span><span style="color:#2c5fe4">246</span><span style="color:#2e2e2e">], [</span><span style="color:#2c5fe4">196</span><span style="color:#2e2e2e">]], </span><span style="color:#871094">dtype</span><span style="color:#2e2e2e">=np.float)  </span><span style="color:#8c8c8c;font-style:italic"># points in left image</span></div>
<div style="position:absolute;left:4.00px;top:316.00px;font:10px/20px 'Liberation Mono', monospace;color:#adadad;white-space:pre">35</div>
<div style="position:absolute;left:50.70px;top:315.00px;font:10.867px/20px 'Liberation Mono', monospace;white-space:pre;transform:scaleY(1.1);transform-origin:0 13px"><span style="color:#2e2e2e">ptr = np.array([[</span><span style="color:#2c5fe4">309</span><span style="color:#2e2e2e">], [</span><span style="color:#2c5fe4">193</span><span style="color:#2e2e2e">]], </span><span style="color:#871094">dtype</span><span style="color:#2e2e2e">=np.float)  </span><span style="color:#8c8c8c;font-style:italic"># Corresponding point in right image</span></div>
<div style="position:absolute;left:4.00px;top:334.00px;font:10px/20px 'Liberation Mono', monospace;color:#adadad;white-space:pre">36</div>
<div style="position:absolute;left:50.70px;top:333.00px;font:10.867px/20px 'Liberation Mono', monospace;white-space:pre;transform:scaleY(1.1);transform-origin:0 13px"><span style="color:#2e2e2e">points = cv2.triangulatePoints(P1, P2, ptl, ptr)</span></div>
<div style="position:absolute;left:4.00px;top:351.00px;font:10px/20px 'Liberation Mono', monospace;color:#adadad;white-space:pre">37</div>
<div style="position:absolute;left:50.70px;top:350.00px;font:10.867px/20px 'Liberation Mono', monospace;white-space:pre;transform:scaleY(1.1);transform-origin:0 13px"><span style="color:#1c1c80">print</span><span style="color:#2e2e2e">(points)</span></div>
<div style="position:absolute;left:4.00px;top:368.00px;font:10px/20px 'Liberation Mono', monospace;color:#adadad;white-space:pre">38</div>
<div style="position:absolute;left:4.00px;top:385.00px;font:10px/20px 'Liberation Mono', monospace;color:#adadad;white-space:pre">39</div>
<div style="position:absolute;left:4.00px;top:402.00px;font:10px/20px 'Liberation Mono', monospace;color:#adadad;white-space:pre">40</div>
<div style="position:absolute;left:4.00px;top:419.00px;font:10px/20px 'Liberation Mono', monospace;color:#adadad;white-space:pre">41</div>
<div style="position:absolute;left:50.70px;top:418.00px;font:10.867px/20px 'Liberation Mono', monospace;white-space:pre;transform:scaleY(1.1);transform-origin:0 13px"><span style="color:#8c8c8c;font-style:italic"># #through disparity map</span></div>
<div style="position:absolute;left:4.00px;top:436.00px;font:10px/20px 'Liberation Mono', monospace;color:#adadad;white-space:pre">42</div>
<div style="position:absolute;left:50.70px;top:435.00px;font:10.867px/20px 'Liberation Mono', monospace;white-space:pre;transform:scaleY(1.1);transform-origin:0 13px"><span style="color:#8c8c8c;font-style:italic"># stereo = cv2.StereoBM_create(numDisparities=16, blockSize=15)</span></div>
<div style="position:absolute;left:4.00px;top:453.00px;font:10px/20px 'Liberation Mono', monospace;color:#adadad;white-space:pre">43</div>
<div style="position:absolute;left:50.70px;top:452.00px;font:10.867px/20px 'Liberation Mono', monospace;white-space:pre;transform:scaleY(1.1);transform-origin:0 13px"><span style="color:#8c8c8c;font-style:italic">#                               0.00000000e+00,  0.00000000e+00, -4.23688858e+02],</span></div>
<svg style="position:absolute;left:174.2px;top:278.5px" width="60" height="3" viewBox="0 0 60 3"><polyline points="0.0,0.5 2.0,2.5 4.0,0.5 6.0,2.5 8.0,0.5 10.0,2.5 12.0,0.5 14.0,2.5 16.0,0.5 18.0,2.5 20.0,0.5 22.0,2.5 24.0,0.5 26.0,2.5 28.0,0.5 30.0,2.5 32.0,0.5 34.0,2.5 36.0,0.5 38.0,2.5 40.0,0.5 42.0,2.5 44.0,0.5 46.0,2.5 48.0,0.5 50.0,2.5 52.0,0.5 54.0,2.5 56.0,0.5 58.0,2.5" fill="none" stroke="#b6d3b0" stroke-width="0.8"/></svg>
<svg style="position:absolute;left:57.2px;top:56.0px" width="9" height="3" viewBox="0 0 9 3"><polyline points="0.0,0.5 2.0,2.5 4.0,0.5 6.0,2.5" fill="none" stroke="#c4c4c4" stroke-width="0.8"/></svg>
<svg style="position:absolute;left:135.5px;top:107.3px" width="9" height="3" viewBox="0 0 9 3"><polyline points="0.0,0.5 2.0,2.5 4.0,0.5 6.0,2.5" fill="none" stroke="#c4c4c4" stroke-width="0.8"/></svg>
<svg style="position:absolute;left:57.2px;top:124.4px" width="15" height="3" viewBox="0 0 15 3"><polyline points="0.0,0.5 2.0,2.5 4.0,0.5 6.0,2.5 8.0,0.5 10.0,2.5 12.0,0.5" fill="none" stroke="#c4c4c4" stroke-width="0.8"/></svg>
<svg style="position:absolute;left:63.7px;top:141.5px" width="9" height="3" viewBox="0 0 9 3"><polyline points="0.0,0.5 2.0,2.5 4.0,0.5 6.0,2.5" fill="none" stroke="#c4c4c4" stroke-width="0.8"/></svg>
<svg style="position:absolute;left:174.2px;top:295.6px" width="60" height="3" viewBox="0 0 60 3"><polyline points="0.0,0.5 2.0,2.5 4.0,0.5 6.0,2.5 8.0,0.5 10.0,2.5 12.0,0.5 14.0,2.5 16.0,0.5 18.0,2.5 20.0,0.5 22.0,2.5 24.0,0.5 26.0,2.5 28.0,0.5 30.0,2.5 32.0,0.5 34.0,2.5 36.0,0.5 38.0,2.5 40.0,0.5 42.0,2.5 44.0,0.5 46.0,2.5 48.0,0.5 50.0,2.5 52.0,0.5 54.0,2.5 56.0,0.5 58.0,2.5" fill="none" stroke="#b6d3b0" stroke-width="0.8"/></svg>
<div style="position:absolute;left:50px;top:432px;width:157px;height:1px;background:repeating-linear-gradient(90deg,#c4c4c4 0 1px,transparent 1px 2px)"></div>
<svg style="position:absolute;left:42.5px;top:13.1px" width="8" height="9" viewBox="0 0 8 9"><path d="M0.5 7.5H6.5V2.5L3.5 0L0.5 2.5Z" fill="#fff" stroke="#cfcfcf" stroke-width="0.9"/><path d="M2 4H5" stroke="#bdbdbd" stroke-width="0.9"/></svg>
<svg style="position:absolute;left:42.5px;top:30.7px" width="8" height="9" viewBox="0 0 8 9"><path d="M0.5 0.5H6.5V5.5L3.5 8L0.5 5.5Z" fill="#fff" stroke="#cfcfcf" stroke-width="0.9"/><path d="M2 4H5" stroke="#bdbdbd" stroke-width="0.9"/></svg>
<svg style="position:absolute;left:42.5px;top:64.4px" width="8" height="9" viewBox="0 0 8 9"><path d="M0.5 7.5H6.5V2.5L3.5 0L0.5 2.5Z" fill="#fff" stroke="#cfcfcf" stroke-width="0.9"/><path d="M2 4H5" stroke="#bdbdbd" stroke-width="0.9"/></svg>
<svg style="position:absolute;left:42.5px;top:99.1px" width="8" height="9" viewBox="0 0 8 9"><path d="M0.5 0.5H6.5V5.5L3.5 8L0.5 5.5Z" fill="#fff" stroke="#cfcfcf" stroke-width="0.9"/><path d="M2 4H5" stroke="#bdbdbd" stroke-width="0.9"/></svg>
<svg style="position:absolute;left:42.5px;top:132.8px" width="8" height="9" viewBox="0 0 8 9"><path d="M0.5 7.5H6.5V2.5L3.5 0L0.5 2.5Z" fill="#fff" stroke="#cfcfcf" stroke-width="0.9"/><path d="M2 4H5" stroke="#bdbdbd" stroke-width="0.9"/></svg>
<svg style="position:absolute;left:42.5px;top:150.4px" width="8" height="9" viewBox="0 0 8 9"><path d="M0.5 0.5H6.5V5.5L3.5 8L0.5 5.5Z" fill="#fff" stroke="#cfcfcf" stroke-width="0.9"/><path d="M2 4H5" stroke="#bdbdbd" stroke-width="0.9"/></svg>
<svg style="position:absolute;left:42.5px;top:252.5px" width="8" height="9" viewBox="0 0 8 9"><path d="M0.5 7.5H6.5V2.5L3.5 0L0.5 2.5Z" fill="#fff" stroke="#cfcfcf" stroke-width="0.9"/><path d="M2 4H5" stroke="#bdbdbd" stroke-width="0.9"/></svg>
<svg style="position:absolute;left:42.5px;top:424.0px" width="8" height="9" viewBox="0 0 8 9"><path d="M0.5 0.5H6.5V5.5L3.5 8L0.5 5.5Z" fill="#fff" stroke="#cfcfcf" stroke-width="0.9"/><path d="M2 4H5" stroke="#bdbdbd" stroke-width="0.9"/></svg>
</div>
<div style="position:absolute;left:442px;top:479px;width:202px;height:31px;background:#f9f9f9;box-sizing:border-box;border:1px solid #cdcdcd"></div>
<div style="position:absolute;left:451.3px;top:486.00px;font:normal normal 10px/20px 'Liberation Sans', sans-serif;color:#000;white-space:pre;-webkit-text-stroke:0.1px #000;transform:scaleX(0.9258);transform-origin:0 0;">PEP 8: E303 too many blank lines (3)</div>
<svg style="position:absolute;left:629px;top:488px" width="4" height="12" viewBox="0 0 4 12"><circle cx="2" cy="2" r="1" fill="#555"/><circle cx="2" cy="6" r="1" fill="#555"/><circle cx="2" cy="10" r="1" fill="#555"/></svg>
<div style="position:absolute;left:0px;top:536.00px;font:normal normal 10px/20px 'Liberation Sans', sans-serif;color:#000;white-space:pre;-webkit-text-stroke:0.1px #000;transform:scaleX(0.8393);transform-origin:0 0;">n:</div>
<svg style="position:absolute;left:24px;top:540px" width="11" height="11" viewBox="0 0 16 16"><path d="M7.9 0.5C4.2 0.5 4.4 2.1 4.4 2.1V3.8H8V4.3H3C3 4.3 0.5 4 0.5 8S2.7 11.7 2.7 11.7H4V9.9S3.9 7.7 6.2 7.7H9.9S12 7.7 12 5.7V2.4S12.3 0.5 7.9 0.5Z" fill="#7fb4e3"/><path d="M8.1 15.5C11.8 15.5 11.6 13.9 11.6 13.9V12.2H8V11.7H13S15.5 12 15.5 8S13.3 4.3 13.3 4.3H12V6.1S12.1 8.3 9.8 8.3H6.1S4 8.3 4 10.3V13.6S3.7 15.5 8.1 15.5Z" fill="#f8d66a"/></svg>
<div style="position:absolute;left:39px;top:536.00px;font:normal normal 10px/20px 'Liberation Sans', sans-serif;color:#000;white-space:pre;-webkit-text-stroke:0.1px #000;transform:scaleX(0.9441);transform-origin:0 0;">4_calibration_fisheye</div>
<svg style="position:absolute;left:134px;top:542px" width="7" height="7" viewBox="0 0 7 7"><path d="M0.8 0.8L6.2 6.2M6.2 0.8L0.8 6.2" stroke="#bfbfbf" stroke-width="0.9"/></svg>
<div style="position:absolute;left:149px;top:553px;width:98px;height:2px;background:#a3adb8;"></div>
<svg style="position:absolute;left:160px;top:540px" width="11" height="11" viewBox="0 0 16 16"><path d="M7.9 0.5C4.2 0.5 4.4 2.1 4.4 2.1V3.8H8V4.3H3C3 4.3 0.5 4 0.5 8S2.7 11.7 2.7 11.7H4V9.9S3.9 7.7 6.2 7.7H9.9S12 7.7 12 5.7V2.4S12.3 0.5 7.9 0.5Z" fill="#7fb4e3"/><path d="M8.1 15.5C11.8 15.5 11.6 13.9 11.6 13.9V12.2H8V11.7H13S15.5 12 15.5 8S13.3 4.3 13.3 4.3H12V6.1S12.1 8.3 9.8 8.3H6.1S4 8.3 4 10.3V13.6S3.7 15.5 8.1 15.5Z" fill="#f8d66a"/></svg>
<div style="position:absolute;left:175.7px;top:536.00px;font:normal normal 10px/20px 'Liberation Sans', sans-serif;color:#000;white-space:pre;-webkit-text-stroke:0.1px #000;transform:scaleX(0.9613);transform-origin:0 0;">coordinates</div>
<svg style="position:absolute;left:232px;top:542px" width="7" height="7" viewBox="0 0 7 7"><path d="M0.8 0.8L6.2 6.2M6.2 0.8L0.8 6.2" stroke="#bfbfbf" stroke-width="0.9"/></svg>
<div style="position:absolute;left:40.8px;top:555.00px;font:10.867px/20px 'Liberation Mono', monospace;color:#2b3088;white-space:pre;transform:scaleY(1.1);transform-origin:0 13px">&quot;C:\Users\Afsah\PycharmProjects\afsah 1\venv\Scripts\python.exe&quot; &quot;C:/Users/Afsah/Desktop/calibration with 2 cam/stereopi-fisheye-robot-master/coordinates.py&quot;</div>
<div style="position:absolute;left:40.8px;top:572.00px;font:10.867px/20px 'Liberation Mono', monospace;color:#262626;white-space:pre;transform:scaleY(1.1);transform-origin:0 13px">[[ 0.14945945]</div>
<div style="position:absolute;left:40.8px;top:589.00px;font:10.867px/20px 'Liberation Mono', monospace;color:#262626;white-space:pre;transform:scaleY(1.1);transform-origin:0 13px"> [-0.08396713]</div>
<div style="position:absolute;left:40.8px;top:607.00px;font:10.867px/20px 'Liberation Mono', monospace;color:#262626;white-space:pre;transform:scaleY(1.1);transform-origin:0 13px"> [-0.98517519]</div>
<div style="position:absolute;left:40.8px;top:624.00px;font:10.867px/20px 'Liberation Mono', monospace;color:#262626;white-space:pre;transform:scaleY(1.1);transform-origin:0 13px"> [-0.00642196]]</div>
<div style="position:absolute;left:40.8px;top:641.00px;font:10.867px/20px 'Liberation Mono', monospace;color:#262626;white-space:pre;transform:scaleY(1.1);transform-origin:0 13px"></div>
<div style="position:absolute;left:40.8px;top:658.00px;font:10.867px/20px 'Liberation Mono', monospace;color:#2b3088;white-space:pre;transform:scaleY(1.1);transform-origin:0 13px">Process finished with exit code 0</div>
<svg style="position:absolute;left:13px;top:563px" width="10" height="11" viewBox="0 0 10 11"><path d="M5 10.5V1M1 5L5 1L9 5" stroke="#bdbdbd" stroke-width="1.2" fill="none"/></svg>
<svg style="position:absolute;left:13px;top:584px" width="10" height="11" viewBox="0 0 10 11"><path d="M5 0.5V10M1 6L5 10L9 6" stroke="#bdbdbd" stroke-width="1.2" fill="none"/></svg>
<svg style="position:absolute;left:12px;top:605px" width="12" height="12" viewBox="0 0 12 12"><path d="M1 1.5H11M1 5.5H9a2 2 0 0 1 0 4H6M7.5 8L6 9.5L7.5 11M1 9.5H3.5" stroke="#6e6e6e" stroke-width="1.2" fill="none"/></svg>
<div style="position:absolute;left:9px;top:623px;width:18px;height:18px;background:#dcdcdc;border-radius:2px"></div>
<svg style="position:absolute;left:12px;top:626px" width="12" height="12" viewBox="0 0 12 12"><path d="M1 1.5H5M1 5H5M1 10.5H11M8 0.5V7.5M5.5 5L8 7.5L10.5 5" stroke="#6e6e6e" stroke-width="1.2" fill="none"/></svg>
<svg style="position:absolute;left:12px;top:647px" width="12" height="12" viewBox="0 0 12 12"><rect x="3" y="0.5" width="6" height="3" fill="#6e6e6e"/><rect x="0.5" y="4" width="11" height="5" rx="1" fill="#6e6e6e"/><rect x="3" y="7" width="6" height="4.5" fill="#fff" stroke="#6e6e6e" stroke-width="1"/></svg>
<svg style="position:absolute;left:13px;top:667px" width="10" height="12" viewBox="0 0 10 12"><rect x="3.5" y="0.5" width="3" height="1.5" fill="#6e6e6e"/><rect x="0.5" y="2" width="9" height="1.5" fill="#6e6e6e"/><path d="M1.3 4H8.7L8 11.5H2Z" fill="#6e6e6e"/></svg></body></html>
